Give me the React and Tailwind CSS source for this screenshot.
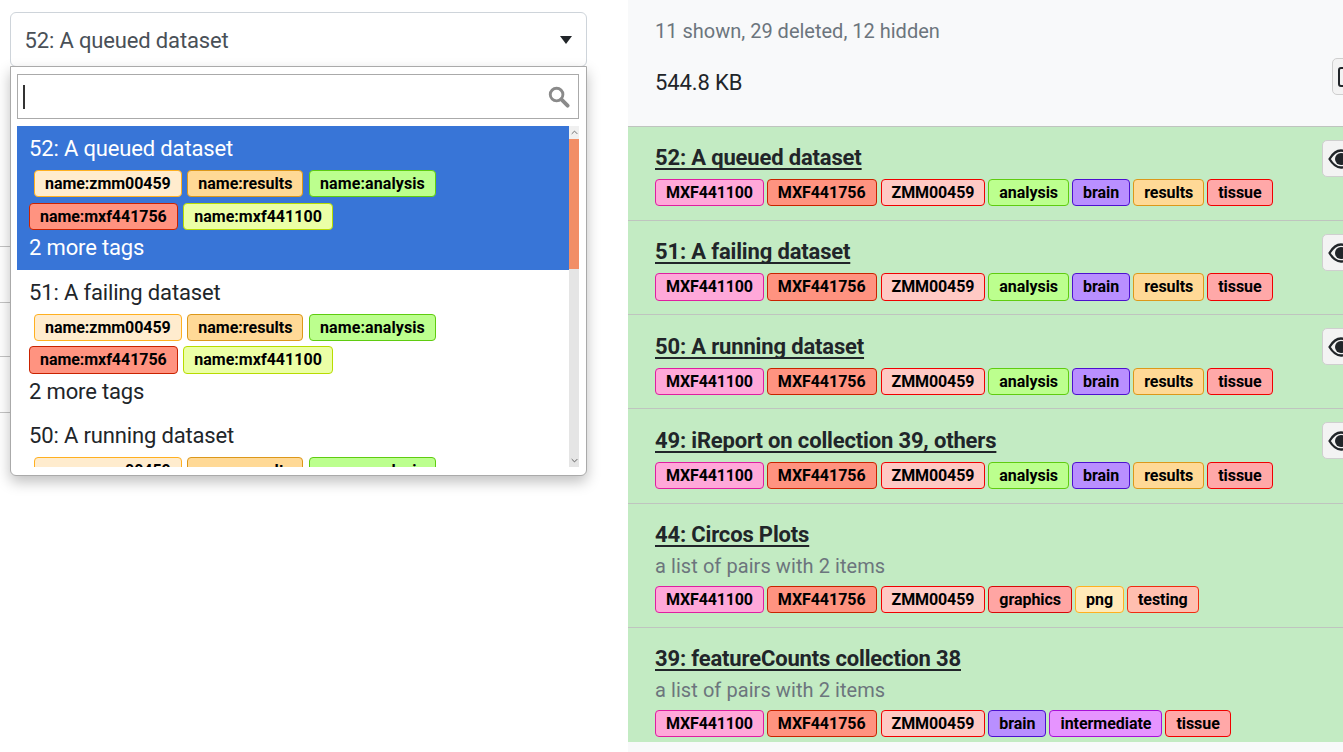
import React from "react";

const C = {
  MXF441100: "bg-[#ffa8d9] border-[#df1ea0]",
  MXF441756: "bg-[#ff9380] border-[#c92200]",
  ZMM00459: "bg-[#ffc9c4] border-[#f00000]",
  analysis: "bg-[#bcff8e] border-[#5fcc10]",
  brain: "bg-[#b98fff] border-[#4d10cf]",
  results: "bg-[#ffd996] border-[#dc981a]",
  tissue: "bg-[#ffa8a8] border-[#f00000]",
  graphics: "bg-[#ffa5a3] border-[#d80808]",
  png: "bg-[#ffeab9] border-[#ffb020]",
  testing: "bg-[#ffbfb0] border-[#f02c10]",
  intermediate: "bg-[#e694ff] border-[#a80fd8]",
};

function Tag({ name, color, extra = "", track = "tracking-[-0.05px]" }) {
  return (
    <span className={`inline-block border rounded-[4px] px-[10px] text-[16px] leading-[25.15px] font-bold text-black whitespace-nowrap ${track} ${color} ${extra}`}>
      {name}
    </span>
  );
}

function EyeIcon() {
  return (
    <svg viewBox="0 0 26 20" className="w-[26px] h-[20px] shrink-0 text-[#212529]" fill="none">
      <path d="M1.5 10C5 4.2 9 1.5 13 1.5S21 4.2 24.5 10C21 15.8 17 18.5 13 18.5S5 15.8 1.5 10Z" stroke="currentColor" strokeWidth="2.3" strokeLinejoin="round" />
      <circle cx="13" cy="10" r="6" fill="currentColor" />
    </svg>
  );
}

function Row({ title, desc, tags, eye, last }) {
  return (
    <div className={`flex justify-between border-t border-[#bfc4bf] bg-[#c3ebc3] pl-[27px] pt-[14.3px] ${last ? "pb-[4.5px]" : "pb-[13.7px]"}`}>
      <div className="flex-1 min-w-0">
        <div className="text-[22px] leading-[33px] tracking-[-0.16px] font-bold text-[#212529] underline underline-offset-[3px] decoration-[1.5px] w-fit [text-decoration-skip-ink:none]">{title}</div>
        {desc && <div className="text-[20px] leading-[30px] tracking-[0.07px] text-[#6c757d]">{desc}</div>}
        <div className="flex gap-[3px] mt-[5px]">
          {tags.map((t) => (
            <Tag
              key={t}
              name={t}
              color={C[t]}
              track={t === "MXF441100" ? "tracking-[-0.15px]" : t === "ZMM00459" ? "tracking-[-0.1px]" : "tracking-[-0.05px]"}
              extra={t === "ZMM00459" ? "ml-[1px]" : ""}
            />
          ))}
        </div>
      </div>
      {eye && (
        <button className="shrink-0 w-[37px] h-[37px] -mr-[16px] -mt-[1.3px] rounded-[5px] border border-[#cfcfcf] bg-[#f3f3f3] flex items-center pl-[5px]">
          <EyeIcon />
        </button>
      )}
    </div>
  );
}

function Option({ title, active }) {
  return (
    <div className={`px-[12px] pt-[8px] pb-[6.5px] text-[22px] leading-[30px] tracking-[-0.15px] ${active ? "bg-[#3875d7] text-white" : "bg-white text-[#212529]"}`}>
      <div>{title}</div>
      <div className="flex flex-wrap gap-x-[5.5px] gap-y-[5.7px] mt-[6px] w-[450px]">
        <Tag name="name:zmm00459" color="bg-[#ffecce] border-[#ffb020]" extra="ml-[5px]" />
        <Tag name="name:results" color="bg-[#ffd996] border-[#dc981a]" track="tracking-[0.03px]" />
        <Tag name="name:analysis" color="bg-[#bcff8e] border-[#5fcc10]" track="tracking-[0.1px]" />
        <Tag name="name:mxf441756" color="bg-[#ff9380] border-[#c92200]" />
        <Tag name="name:mxf441100" color="bg-[#ebffa6] border-[#b8dc00]" track="tracking-[0.03px]" />
      </div>
      <div className="mt-[3px]">2 more tags</div>
    </div>
  );
}

export default function App() {
  const base = ["MXF441100", "MXF441756", "ZMM00459"];
  const full = [...base, "analysis", "brain", "results", "tissue"];
  return (
    <div className="flex h-[752px] w-full overflow-hidden bg-white font-['Roboto',sans-serif]">
      <div className="relative w-[628px] shrink-0">
        <div className="ml-[9.5px] mt-[12px] w-[577px] h-[55px] rounded-[6px] border border-[#ced4da] bg-white flex items-center justify-between pl-[14px] pr-[14px] pt-[1px] text-[22px] tracking-[-0.15px] text-[#495057]">
          <span>52: A queued dataset</span>
          <span className="w-0 h-0 border-x-[6.5px] border-x-transparent border-t-[8px] border-t-[#212529]" />
        </div>
        <div className="mt-[179px] w-[586px]">
          <div className="h-[56px] border-t border-[#c4c4c4]" />
          <div className="h-[54px] border-t border-[#c4c4c4]" />
          <div className="h-[56px] border-t border-[#c4c4c4]" />
          <div className="h-[56px] border-t border-[#c4c4c4]" />
        </div>

        <div className="absolute left-[9.5px] top-[66px] w-[577px] h-[409.5px] bg-white border border-[#aaaaaa] rounded-b-[6px] shadow-[0_6px_14px_rgba(0,0,0,0.25)] pl-[6.5px] pr-[6.5px] pt-[7px]">
          <div className="relative h-[45px] border border-[#aaaaaa] bg-white flex items-center justify-between pl-[5px] pr-[8px]">
            <span className="w-[1.5px] h-[24px] bg-[#333333]" />
            <svg viewBox="0 0 24 24" className="w-[23px] h-[23px]" fill="none" stroke="#8a8a8a">
              <circle cx="10" cy="10" r="6.6" strokeWidth="3" />
              <path d="M15 15l6.5 6.5" strokeWidth="4" strokeLinecap="round" />
            </svg>
          </div>
          <div className="mt-[7px] h-[341px] flex overflow-hidden">
            <div className="flex-1 min-w-0 overflow-hidden">
              <Option title="52: A queued dataset" active />
              <Option title="51: A failing dataset" />
              <Option title="50: A running dataset" />
            </div>
            <div className="w-[10px] shrink-0 flex flex-col bg-[#e5e5e5]">
              <div className="h-[13px] bg-[#f0f0f0] flex items-center justify-center">
                <svg viewBox="0 0 10 6" className="w-[7px] h-[5px]" fill="none" stroke="#666" strokeWidth="1.3"><path d="M1 5l4-4 4 4" /></svg>
              </div>
              <div className="h-[130px] bg-[#f28e66]" />
              <div className="flex-1" />
              <div className="h-[13px] flex items-center justify-center">
                <svg viewBox="0 0 10 6" className="w-[7px] h-[5px]" fill="none" stroke="#555" strokeWidth="1.3"><path d="M1 1l4 4 4-4" /></svg>
              </div>
            </div>
          </div>
        </div>
      </div>

      <div className="flex-1 min-w-0 bg-[#f8f9fa] overflow-hidden">
        <div className="h-[126px] pl-[27px] flex flex-col">
          <div className="mt-[16px] text-[20px] leading-[30px] text-[#6c757d]">11 shown, 29 deleted, 12 hidden</div>
          <div className="mt-[12px] flex items-start justify-between h-[37px]">
            <span className="mt-[7.5px] text-[22px] leading-[33px] tracking-[-0.1px] text-[#212529]">544.8 KB</span>
            <button className="shrink-0 w-[37px] h-[37px] -mr-[26px] rounded-[5px] border border-[#cfcfcf] bg-[#f3f3f3] flex items-center pl-[5px]">
              <span className="block w-[16px] h-[20px] rounded-[3px] border-2 border-[#212529] shrink-0" />
            </button>
          </div>
        </div>
        <Row title="52: A queued dataset" tags={full} eye />
        <Row title="51: A failing dataset" tags={full} eye />
        <Row title="50: A running dataset" tags={full} eye />
        <Row title="49: iReport on collection 39, others" tags={full} eye />
        <Row title="44: Circos Plots" desc="a list of pairs with 2 items" tags={[...base, "graphics", "png", "testing"]} />
        <Row title="39: featureCounts collection 38" desc="a list of pairs with 2 items" tags={[...base, "brain", "intermediate", "tissue"]} last />
      </div>
    </div>
  );
}
